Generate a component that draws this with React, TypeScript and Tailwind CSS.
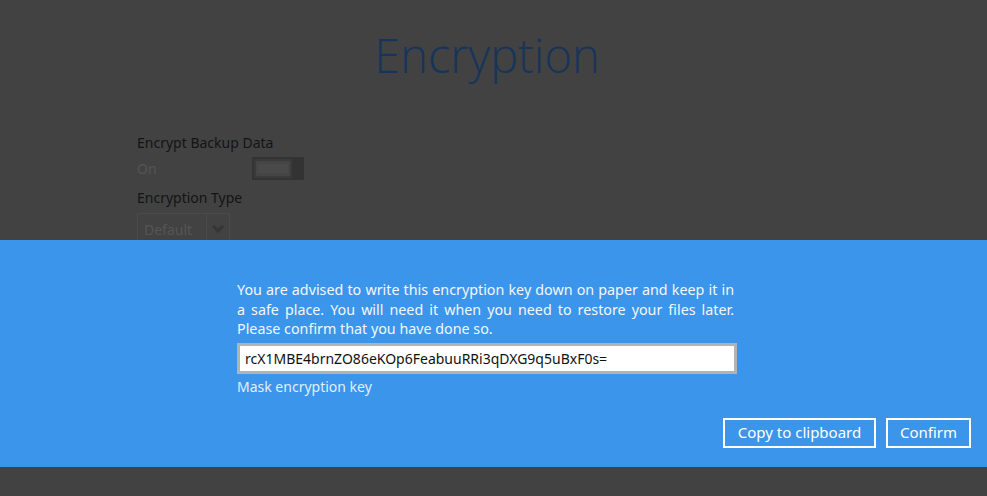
import React from "react";

export default function App() {
  const font = { fontFamily: '"Noto Sans", "Open Sans", sans-serif' };
  const justifyLine = "block text-justify [text-align-last:justify]";
  return (
    <div className="w-[987px] h-[496px] bg-[#424242] flex flex-col overflow-hidden" style={font}>
      <div className="h-[240px] flex flex-col shrink-0 overflow-hidden">
        <div className="h-[31px] shrink-0" />
        <div className="shrink-0 text-center pr-[13px] text-[47px] leading-[48px] font-light text-[#17345a]" style={{ fontFamily: '"Open Sans", "Noto Sans", sans-serif' }}>
          Encryption
        </div>
        <div className="shrink-0 pl-[137px] pt-[54px] flex flex-col">
          <div className="text-[14px] leading-[20px] text-[#141414]">Encrypt Backup Data</div>
          <div className="flex items-center h-[23px] mt-[4px]">
            <div className="w-[115px] text-[14px] text-[#555555]">On</div>
            <div className="w-[52px] h-[23px] bg-[#333333] flex items-center pl-[2px]">
              <div className="w-[38px] h-[19px] border-2 border-[#3a3a3a] bg-[#454545] flex items-center justify-center">
                <div className="w-[30px] h-[9px] bg-[#4a4a4a]" />
              </div>
            </div>
          </div>
          <div className="text-[14px] leading-[20px] text-[#141414] mt-[8px]">Encryption Type</div>
          <div className="mt-[5px] w-[93px] h-[32px] border border-[#4a4a4a] flex">
            <div className="flex-1 flex items-center pl-[6px] text-[14px] text-[#555555] border-r border-[#4a4a4a]">Default</div>
            <div className="w-[22px] flex items-center justify-center">
              <svg width="12" height="8" viewBox="0 0 12 8">
                <path d="M1 1 L6 6 L11 1" stroke="#353535" strokeWidth="3" fill="none" />
              </svg>
            </div>
          </div>
        </div>
      </div>
      <div className="h-[227px] bg-[#3b95ea] shrink-0 flex flex-col pt-[40px] px-[16px]">
        <div className="pl-[221px] w-[721px]">
          <p className="text-[14.3px] leading-[19.5px] text-[#f3f7fc] w-[497px]">
            <span className={justifyLine}>You are advised to write this encryption key down on paper and keep it in</span>
            <span className={justifyLine}>a safe place. You will need it when you need to restore your files later.</span>
            <span className="block">Please confirm that you have done so.</span>
          </p>
          <div className="mt-[4px] w-[500px] h-[31px] bg-white border-[3px] border-[#b3b3b3] flex items-center pl-[5px] text-[14px] text-[#111111]">
            rcX1MBE4brnZO86eKOp6FeabuuRRi3qDXG9q5uBxF0s=
          </div>
          <div className="mt-[3px] text-[14px] leading-[20px] text-[#e2eefb]">Mask encryption key</div>
        </div>
        <div className="flex justify-end gap-[10px] mt-[21px]">
          <button className="w-[153px] h-[30px] border-2 border-white text-white text-[15px] leading-none">Copy to clipboard</button>
          <button className="w-[85px] h-[30px] border-2 border-white text-white text-[15px] leading-none">Confirm</button>
        </div>
      </div>
      <div className="flex-1 bg-[#424242]" />
    </div>
  );
}
